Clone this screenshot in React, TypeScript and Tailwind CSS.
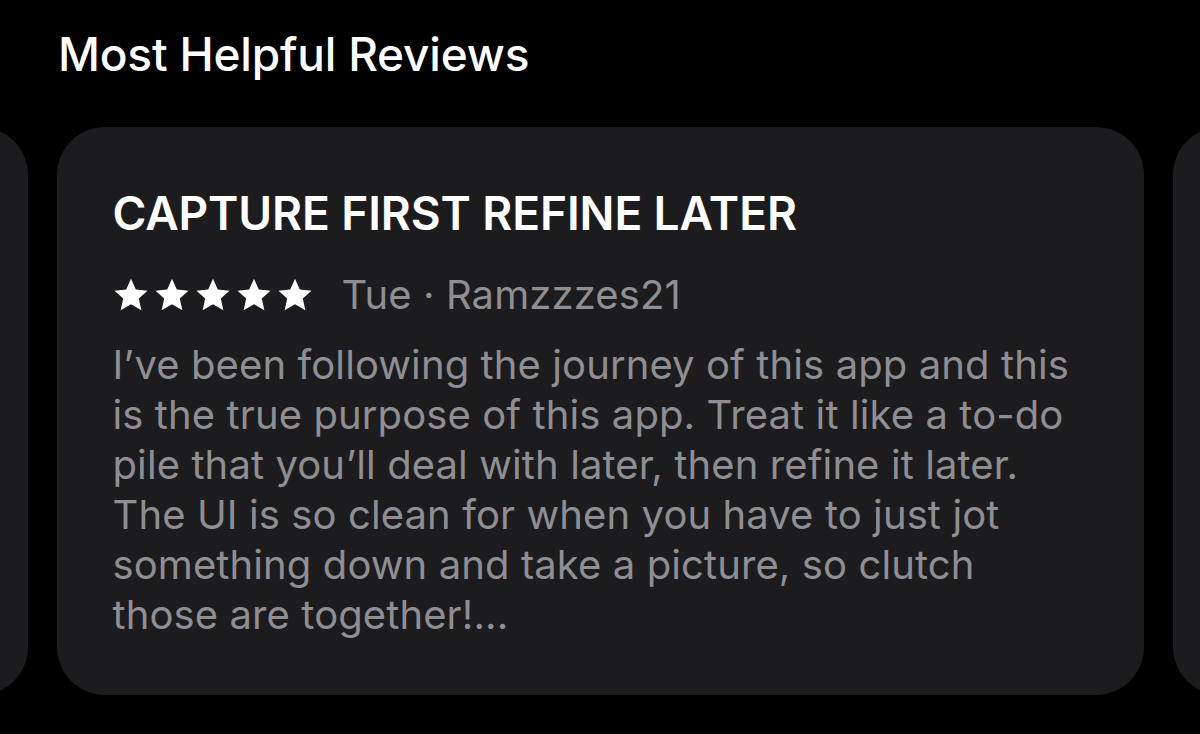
import React from 'react';

const font = { fontFamily: 'Inter, "Noto Sans", sans-serif' };

const Star: React.FC = () => (
  <svg viewBox="0 0 24 24" className="w-[36px] h-[36px] fill-white">
    <path d="M12 1.2l3.2 7.1 7.8.8-5.8 5.3 1.7 7.7L12 18.2l-6.9 3.9 1.7-7.7L1 9.1l7.8-.8z" />
  </svg>
);

const ReviewCard: React.FC<{ ghost?: boolean }> = ({ ghost }) => (
  <div className="shrink-0 w-[1087px] h-[568px] rounded-[48px] bg-[#1c1c1e] pl-[56px] pr-[69px] pt-[60px]">
    {!ghost && (
      <>
        <h2 className="text-[46px] leading-[52px] font-semibold text-white tracking-[-0.1px]">CAPTURE FIRST REFINE LATER</h2>
        <div className="flex items-center mt-[34px] h-[44px]">
          <div className="flex gap-[5px]">
            {[0, 1, 2, 3, 4].map(i => <Star key={i} />)}
          </div>
          <span className="ml-[29px] text-[40px] leading-[44px] text-[#8e8e93] tracking-[0.1px]">Tue · Ramzzzes21</span>
        </div>
        <p className="mt-[23px] text-[40px] leading-[50px] text-[#8e8e93] tracking-[0.1px]">
          I’ve been following the journey of this app and this is the true purpose of this app. Treat it like a to-do pile that you’ll deal with later, then refine it later. The UI is so clean for when you have to just jot something down and take a picture, so clutch those are together!...
        </p>
      </>
    )}
  </div>
);

export default function App() {
  return (
    <div className="w-[1200px] h-[734px] bg-black overflow-hidden" style={font}>
      <h1 className="pl-[58px] pt-[26px] text-[46px] leading-[56px] font-medium text-white tracking-[-0.2px]">Most Helpful Reviews</h1>
      <div className="flex justify-center gap-[29px] mt-[45px]">
        <ReviewCard ghost />
        <ReviewCard />
        <ReviewCard ghost />
      </div>
    </div>
  );
}
